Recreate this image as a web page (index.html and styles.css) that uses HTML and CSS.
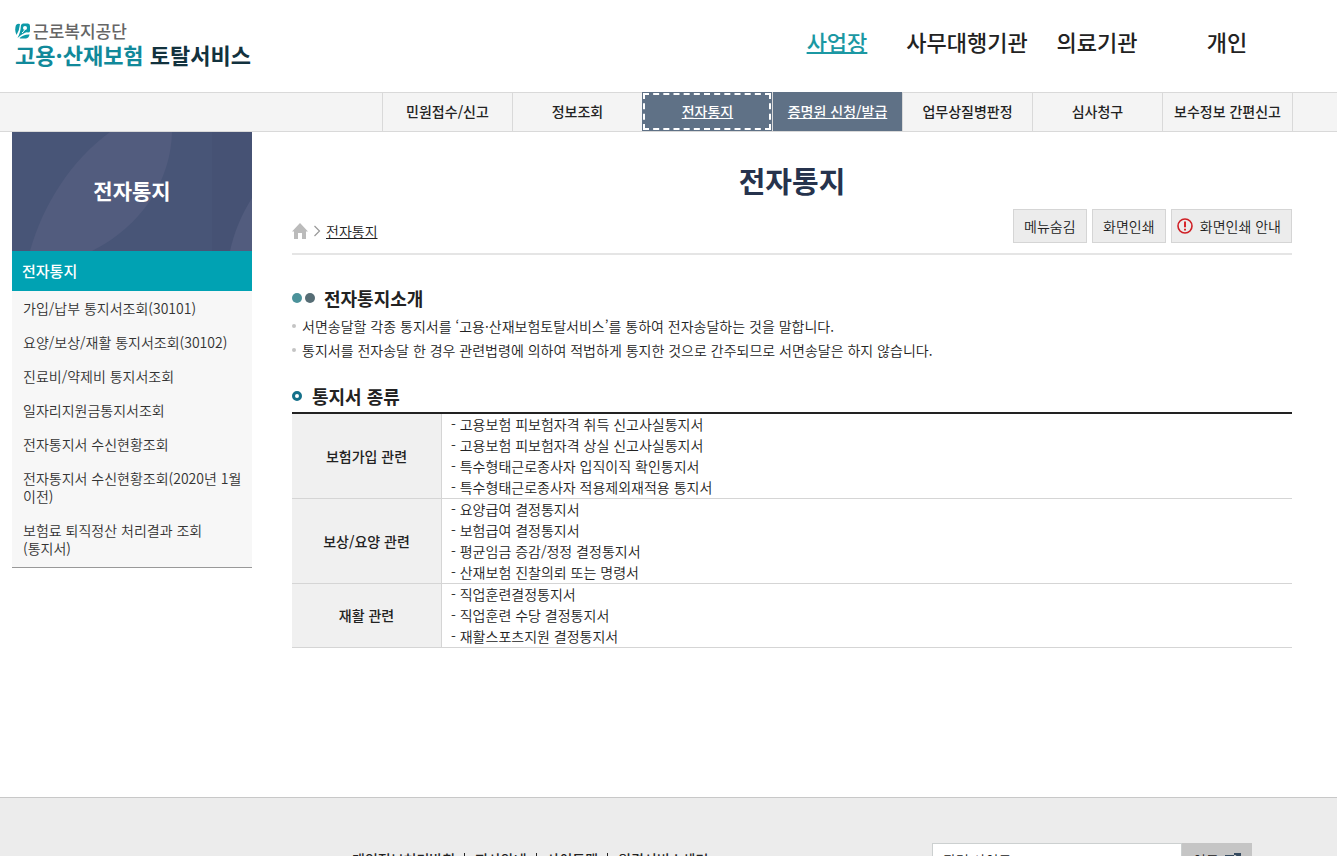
FILE: index.html
```html
<!DOCTYPE html>
<html lang="ko">
<head>
<meta charset="utf-8">
<meta name="viewport" content="width=device-width, initial-scale=1">
<title>전자통지 - 고용·산재보험 토탈서비스</title>
<link rel="stylesheet" href="styles.css">
</head>
<body>
<header class="header">
  <a class="logo" href="#">
    <span class="logo-org">
      <svg class="logo-mark" viewBox="0 0 15 16" aria-hidden="true">
        <path fill="#0d9aa8" d="M1 2Q3 0 5 1Q4.500 7 1.500 12Q-.8 7 1 2Z"/>
        <path fill="#0d9aa8" d="M6 2Q7 .5 8 .5H13Q15 .5 15 3V8Q15 9.500 13 9.500Q11.500 9 10 9.800Q5.500 12 2.500 15Q5.500 10 6 2Z"/>
        <path fill="#0d9aa8" d="M4.500 15Q9 11 14.500 11.500Q14 15 11 15.500H6Q5 15.500 4.500 15Z"/>
        <circle cx="10" cy="5" r="2" fill="#fff"/>
        <path d="M7 10Q8.500 9 9.500 7" fill="none" stroke="#fff" stroke-width="1"/>
      </svg>
      근로복지공단
    </span>
    <span class="logo-service"><span class="logo-accent">고용·산재보험</span> 토탈서비스</span>
  </a>
  <nav class="gnb" aria-label="주메뉴">
    <a class="gnb-link is-current" href="#">사업장</a>
    <a class="gnb-link" href="#">사무대행기관</a>
    <a class="gnb-link" href="#">의료기관</a>
    <a class="gnb-link" href="#">개인</a>
  </nav>
</header>

<nav class="subnav" aria-label="사업장 메뉴">
  <a class="subnav-link" href="#">민원접수/신고</a>
  <a class="subnav-link" href="#">정보조회</a>
  <a class="subnav-link is-active is-focused" href="#">전자통지</a>
  <a class="subnav-link is-active" href="#">증명원 신청/발급</a>
  <a class="subnav-link" href="#">업무상질병판정</a>
  <a class="subnav-link" href="#">심사청구</a>
  <a class="subnav-link" href="#">보수정보 간편신고</a>
</nav>

<div class="layout">
  <aside class="side">
    <div class="side-banner">
      <svg class="side-art" viewBox="0 0 240 119" preserveAspectRatio="none" aria-hidden="true">
        <path fill="#465274" d="M200 0H240V119H200Z"/>
        <path fill="#525c7e" d="M18 119C30 75 58 29 98 0H160C159 48 130 94 80 119Z"/>
        <path fill="#525c7e" d="M218 119C222 101 229 83 240 66V119Z"/>
      </svg>
      <h2 class="side-title">전자통지</h2>
    </div>
    <a class="side-current" href="#">전자통지</a>
    <ul class="side-list">
      <li><a href="#">가입/납부 통지서조회(30101)</a></li>
      <li><a href="#">요양/보상/재활 통지서조회(30102)</a></li>
      <li><a href="#">진료비/약제비 통지서조회</a></li>
      <li><a href="#">일자리지원금통지서조회</a></li>
      <li><a href="#">전자통지서 수신현황조회</a></li>
      <li><a href="#">전자통지서 수신현황조회(2020년 1월 이전)</a></li>
      <li><a href="#">보험료 퇴직정산 처리결과 조회<br>(통지서)</a></li>
    </ul>
  </aside>

  <main class="main">
    <h1 class="page-title">전자통지</h1>
    <div class="toolbar">
      <div class="crumbs">
        <a class="crumb-home" href="#" aria-label="홈">
          <svg viewBox="0 0 16 16" width="16" height="16" aria-hidden="true"><path fill="#bbb" d="M8 0L16 8.500H14V16H10V10H6V16H2V8.500H0Z"/></svg>
        </a>
        <svg viewBox="0 0 8 12" width="8" height="12" aria-hidden="true"><path d="M1.500 1L6.500 6L1.500 11" fill="none" stroke="#999" stroke-width="1.200"/></svg>
        <a class="crumb-here" href="#">전자통지</a>
      </div>
      <div class="actions">
        <button class="btn" type="button">메뉴숨김</button>
        <button class="btn" type="button">화면인쇄</button>
        <button class="btn btn-guide" type="button">
          <svg viewBox="0 0 16 16" width="16" height="16" aria-hidden="true"><circle cx="8" cy="8" r="7" fill="none" stroke="#cf1f25" stroke-width="1.600"/><path d="M8 3.500V9.300M8 10.800V12.600" stroke="#d8262b" stroke-width="2"/></svg>
          화면인쇄 안내
        </button>
      </div>
    </div>

    <section class="section">
      <h3 class="heading"><span class="dots"><i class="dot dot-teal"></i><i class="dot dot-slate"></i></span>전자통지소개</h3>
      <ul class="notes">
        <li>서면송달할 각종 통지서를 ‘고용·산재보험토탈서비스’를 통하여 전자송달하는 것을 말합니다.</li>
        <li>통지서를 전자송달 한 경우 관련법령에 의하여 적법하게 통지한 것으로 간주되므로 서면송달은 하지 않습니다.</li>
      </ul>
    </section>

    <section class="section-types">
      <h3 class="heading"><i class="ring"></i>통지서 종류</h3>
      <table class="types">
        <tbody>
          <tr>
            <th scope="row">보험가입 관련</th>
            <td>- 고용보험 피보험자격 취득 신고사실통지서<br>- 고용보험 피보험자격 상실 신고사실통지서<br>- 특수형태근로종사자 입직이직 확인통지서<br>- 특수형태근로종사자 적용제외재적용 통지서</td>
          </tr>
          <tr>
            <th scope="row">보상/요양 관련</th>
            <td>- 요양급여 결정통지서<br>- 보험급여 결정통지서<br>- 평균임금 증감/정정 결정통지서<br>- 산재보험 진찰의뢰 또는 명령서</td>
          </tr>
          <tr>
            <th scope="row">재활 관련</th>
            <td>- 직업훈련결정통지서<br>- 직업훈련 수당 결정통지서<br>- 재활스포츠지원 결정통지서</td>
          </tr>
        </tbody>
      </table>
    </section>
  </main>
</div>

<footer class="footer">
  <nav class="footer-links" aria-label="하단 메뉴">
    <a href="#">개인정보처리방침</a>
    <a href="#">지사안내</a>
    <a href="#">사이트맵</a>
    <a href="#">원격서비스센터</a>
  </nav>
  <form class="related">
    <select class="related-select" aria-label="관련 사이트">
      <option>관련 사이트</option>
    </select>
    <button class="related-go" type="button">이동
      <svg class="related-icon" viewBox="0 0 16 14" width="16" height="14" aria-hidden="true"><path d="M9 3H1V13H12V7" fill="none" stroke="#34495e" stroke-width="2"/><path d="M6 9L14 1M9 1H15V7" fill="none" stroke="#34495e" stroke-width="2"/></svg>
    </button>
  </form>
</footer>
</body>
</html>
```
FILE: styles.css
```css
* { box-sizing: border-box; }

html { overflow: hidden; }

body {
  margin: 0;
  background: #fff;
  color: #222;
  font: 350 14px/21px "Noto Sans CJK KR", "Noto Sans", sans-serif;
  height: 100vh;
  overflow: hidden;
}

a { color: inherit; text-decoration: none; }
h1, h2, h3, ul { margin: 0; padding: 0; }
ul { list-style: none; }
button, select { font: inherit; color: inherit; border-radius: 0; }

.header {
  display: flex;
  justify-content: space-between;
  height: 92px;
  padding: 0 45px 0 15px;
}

.logo { padding-top: 20px; white-space: nowrap; }
.logo-org {
  display: flex;
  align-items: center;
  gap: 3px;
  color: #666;
  font-size: 17px;
  font-weight: 500;
  line-height: 22px;
}
.logo-mark { width: 15px; height: 16px; }
.logo-service {
  display: block;
  color: #12323e;
  font-size: 22px;
  font-weight: 700;
  line-height: 24px;
}
.logo-accent { color: #11899a; }

.gnb { display: flex; }
.gnb-link {
  width: 130px;
  padding-top: 25px;
  font-size: 22px;
  font-weight: 500;
  line-height: 32px;
  text-align: center;
  white-space: nowrap;
}
.gnb-link.is-current {
  color: #1b98a3;
  text-decoration: underline;
  text-decoration-thickness: 2px;
}

.subnav {
  display: flex;
  justify-content: flex-end;
  height: 40px;
  padding-right: 44px;
  border-top: 1px solid #d9d9d9;
  border-bottom: 1px solid #d9d9d9;
  background: #f4f4f4;
}
.subnav-link {
  width: 130px;
  border-left: 1px solid #d9d9d9;
  font-weight: 500;
  line-height: 36px;
  text-align: center;
  white-space: nowrap;
}
.subnav-link:last-child { width: 131px; border-right: 1px solid #d9d9d9; }
.subnav-link.is-active {
  margin-top: -1px;
  padding-top: 1px;
  background: #5f7186;
  color: #fff;
  text-decoration: underline;
}
.subnav-link.is-focused { outline: 2px dashed #fff; outline-offset: -3px; border-left-color: #5f7186; }

.layout {
  display: flex;
  align-items: flex-start;
  gap: 40px;
  min-height: 665px;
  padding: 0 45px 0 12px;
}

.side { flex: 0 0 240px; border-bottom: 1px solid #999; background: #f7f7f7; }
.side-banner {
  position: relative;
  display: flex;
  align-items: center;
  justify-content: center;
  height: 119px;
  padding-bottom: 4px;
  background: #485577;
}
.side-art { position: absolute; inset: 0; width: 100%; height: 100%; }
.side-title {
  position: relative;
  color: #fff;
  font-size: 21px;
  font-weight: 700;
  line-height: 30px;
}
.side-current {
  display: block;
  padding: 0 10px;
  background: #00a2b3;
  color: #fff;
  font-size: 15px;
  font-weight: 500;
  line-height: 40px;
}
.side-list { padding-bottom: 2px; }
.side-list a {
  display: block;
  padding: 8px 4px 8px 11px;
  color: #333;
  line-height: 18px;
  word-break: keep-all;
}

.main { flex: 1; min-width: 0; }
.page-title {
  padding: 26px 0 7px;
  color: #26334d;
  font-size: 29px;
  font-weight: 700;
  line-height: 44px;
  text-align: center;
}
.toolbar {
  display: flex;
  align-items: center;
  justify-content: space-between;
  padding-bottom: 10px;
  border-bottom: 2px solid #e5e5e5;
}
.crumbs { display: flex; align-items: center; gap: 5px; padding-top: 10px; }
.crumb-home { display: flex; }
.crumb-here { text-decoration: underline; }
.actions { display: flex; gap: 5px; }
.btn {
  min-width: 74px;
  height: 34px;
  padding: 0 10px;
  border: 1px solid #d5d5d5;
  background: #ececec;
  white-space: nowrap;
}
.btn-guide { display: flex; align-items: center; gap: 7px; padding-left: 5px; }

.section { padding-top: 29px; }
.heading {
  display: flex;
  align-items: center;
  font-size: 18px;
  font-weight: 700;
  line-height: 28px;
}
.dots { display: flex; gap: 3px; margin-right: 9px; }
.dot { width: 10px; height: 10px; border-radius: 50%; }
.dot-teal { background: #4b929a; }
.dot-slate { background: #566d75; }
.ring {
  width: 10px;
  height: 10px;
  margin-right: 10px;
  border: 3px solid #14708a;
  border-radius: 50%;
}
.notes { padding-top: 2px; }
.notes li {
  display: flex;
  align-items: center;
  gap: 6px;
  line-height: 24px;
}
.notes li::before {
  content: "";
  flex: none;
  width: 4px;
  height: 4px;
  border-radius: 50%;
  background: #c4c4c4;
}

.section-types { padding-top: 20px; }
.types {
  width: 100%;
  margin-top: 2px;
  border-top: 2px solid #222;
  border-spacing: 0;
}
.types th {
  width: 150px;
  padding: 0;
  border-right: 1px solid #d5d5d5;
  border-bottom: 1px solid #d5d5d5;
  background: #f0f0f0;
  font-weight: 500;
}
.types td { padding: 0 9px; border-bottom: 1px solid #d5d5d5; }

.footer {
  display: flex;
  justify-content: space-between;
  padding: 45px 85px 40px 352px;
  border-top: 1px solid #c8c8c8;
  background: #ececec;
}
.footer-links {
  display: flex;
  align-items: flex-start;
  padding-top: 6px;
  font-weight: 500;
}
.footer-links a { display: flex; align-items: center; white-space: nowrap; }
.footer-links a + a::before {
  content: "";
  width: 1px;
  height: 14px;
  margin: 0 10px 0 9px;
  background: #222;
}
.related { display: flex; }
.related-select {
  appearance: none;
  width: 250px;
  height: 34px;
  padding: 0 10px;
  border: 1px solid #ccd0d0;
  background: #fff;
}
.related-go {
  display: flex;
  align-items: center;
  gap: 6px;
  width: 70px;
  height: 34px;
  padding: 0 11px;
  border: 0;
  background: #c5c5c5;
  white-space: nowrap;
}
.related-icon { flex: none; }
```
